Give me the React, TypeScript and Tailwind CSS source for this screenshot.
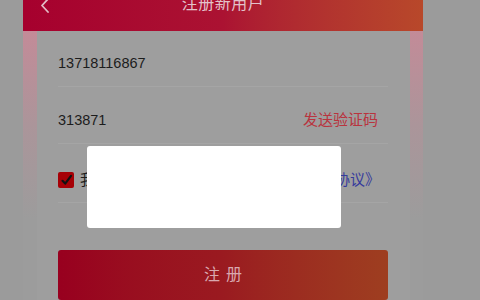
import React from "react";

const font = { fontFamily: '"Liberation Sans", "Noto Sans CJK SC", sans-serif' };

function BackIcon() {
  return (
    <svg width="12" height="16" viewBox="0 0 12 16" fill="none">
      <path d="M9 1 L3 7.5 L9 14" stroke="#e2bcc6" strokeWidth="1.8" strokeLinecap="round" strokeLinejoin="round" />
    </svg>
  );
}

function CheckBox() {
  return (
    <span className="w-4 h-4 rounded-[2px] bg-[#a60006] flex items-center justify-center shrink-0">
      <svg width="13" height="13" viewBox="0 0 13 13" fill="none">
        <path d="M2.5 6.8 L5.2 9.6 L11 1.8" stroke="#111" strokeWidth="2.2" strokeLinecap="round" strokeLinejoin="round" />
      </svg>
    </span>
  );
}

export default function App() {
  return (
    <div className="w-[480px] h-[300px] bg-[#9b9b9b] overflow-hidden relative" style={font}>
      <div className="ml-[23px] w-[400px] h-full flex flex-col">
        {/* header */}
        <div className="h-[31px] shrink-0 bg-gradient-to-r from-[#a6002e] via-[#ab1232] to-[#b8482a] relative flex justify-center">
          <div className="absolute left-[16px] top-[-2px]">
            <BackIcon />
          </div>
          <span className="text-[16px] leading-none mt-[-4px] text-[#e3c2ca] tracking-[0.5px]">注册新用户</span>
        </div>

        <div className="flex flex-1">
          <div className="w-[14px] bg-[linear-gradient(to_bottom,#c38b98,#ab959a_35%,#9c9c9c_70%)]" />

          {/* form panel */}
          <div className="w-[373px] bg-[#9e9e9e] pl-[21px] pr-[22px]">
            <div className="pt-[22px] pb-[13px] border-b border-[#a5a5a5]">
              <span className="text-[14.5px] leading-[20px] text-[#1c1c1c] block">13718116867</span>
            </div>

            <div className="pt-[23px] pb-[13px] border-b border-[#a5a5a5] flex items-center justify-between">
              <span className="text-[14.5px] leading-[20px] text-[#1c1c1c]">313871</span>
              <span className="text-[15px] leading-[20px] text-[#b9343e] mr-[10px]">发送验证码</span>
            </div>

            <div className="pt-[26px] pb-[12px] border-b border-[#a5a5a5] flex items-center gap-[6px]">
              <CheckBox />
              <span className="text-[15px] leading-[20px] text-[#1c1c1c] whitespace-nowrap">
                我已阅读并同意
                <span className="text-[#363b9c]">《好药师网站用户服务协议》</span>
              </span>
            </div>

            <button className="mt-[47px] w-[330px] h-[50px] rounded-[3px] bg-gradient-to-r from-[#98001f] via-[#9a1a20] to-[#9e3e20] flex items-center justify-center">
              <span className="text-[16px] text-[#d9a8af] tracking-[6px] pl-[6px]">注册</span>
            </button>
          </div>

          <div className="w-[13px] bg-[linear-gradient(to_bottom,#c38b98,#ab959a_35%,#9c9c9c_70%)]" />
        </div>
      </div>

      {/* dialog */}
      <div className="absolute left-[87px] top-[146px] w-[254px] h-[82px] bg-white rounded-[3px]" />
    </div>
  );
}
